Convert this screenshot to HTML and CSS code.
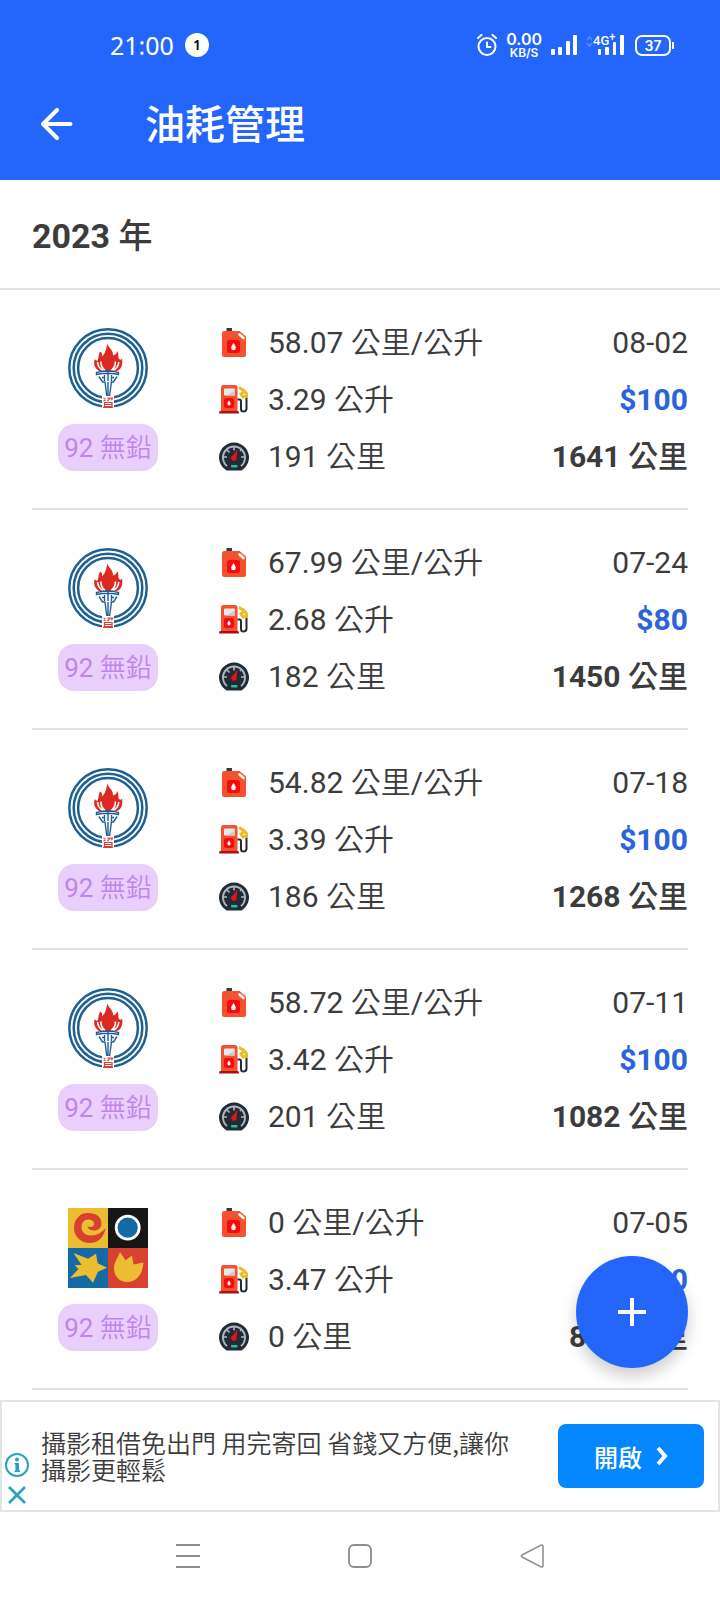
FILE: index.html
```html
<!DOCTYPE html>
<html lang="zh-Hant">
<head>
<meta charset="utf-8">
<meta name="viewport" content="width=device-width, initial-scale=1">
<title>油耗管理</title>
<link rel="stylesheet" href="styles.css">
</head>
<body>
<svg class="sprite" aria-hidden="true">
  <symbol id="torch" viewBox="0 0 80 80">
    <g fill="none" stroke="#1f6093" stroke-width="2.500">
      <circle cx="40" cy="40" r="38.700"/><circle cx="40" cy="40" r="34.300"/><circle cx="40" cy="40" r="29.900"/>
    </g>
    <path fill="#fff" d="M34 65h12v15H34z"/>
    <path fill="#dc2a22" d="M39.500 15.500c.3 4 6 6 5.500 12 2.500-.8 4-2 4-4.500 2.500 3 .5 5.500 2 8 1.500 1.500 2.500.5 3-.5C55 36 54 41 49 43H31c-4.500-3-6-8-4-12 .8 1.500 1.500 2 2.500 1.500 1.500-2.500.5-5 2.500-9 2.500 1 2 3 2 5C38.500 24 38 20 39.500 15.500z"/>
    <path fill="none" stroke="#fff" stroke-width="1.600" d="M29.500 34c.3 4 2 6.500 5.500 8.500M33 33.500c-.5 3.500.5 6 4 9M50.800 34c-.3 4-2 6.500-5.500 8.500M47.300 33.500c.5 3.500-.5 6-4 9"/>
    <g fill="none" stroke="#1f6093" stroke-width="1.400">
      <path d="M28.500 44.500q11.500-3 22 0v2q-11-2.600-22 0zM31 48.500l3.500 5.500h3M49 48.500l-3.500 5.500h-3M36.500 47v6M43.500 47v6M40 42.500V53M34 49.500h2.500M43.500 49.500H46M37 54l1.800 14M40 54v14M43.500 54l-2 14"/>
    </g>
    <g fill="none" stroke="#d6403c" stroke-width="1.200"><path d="M35.500 70.200l2 .8M35.500 73l2-1M39.500 70.200h5l-1 2M41.500 71l-2 2M36.500 74.500h7.500v4h-7.500zM36.500 76.500h7.500M35 79.300h10"/></g>
  </symbol>
  <symbol id="mosaic" viewBox="0 0 80 80">
    <path fill="#edbd31" d="M0 0h40v40H0z"/><path fill="#161616" d="M40 0h40v40H40z"/>
    <path fill="#146aa4" d="M0 40h40v40H0z"/><path fill="#d8412f" d="M40 40h40v40H40z"/>
    <path fill="#d8412f" d="M37.700 20C36 29 30 35 22 35 12 35 6 28 6 20 6 11 12 5 20 5c8 0 13.500 4 13.500 10.500 0 4.500-3.500 7-7.500 7-3.500 0-6-1.500-6.500-4 3 1 6 .5 6.500-2 .5-3.500-2.500-5-5.500-5-4.500 0-7 3.500-7 7.500 0 5.500 4 8.500 9.500 8.500 6.500 0 10.500-3 14.700-7.500z"/>
    <circle cx="59.700" cy="19.700" r="11.500" fill="#146aa4" stroke="#fff" stroke-width="2.800"/>
    <path fill="#edbd31" d="M5.500 45L20 50.700l8-5 1.700 9.600L39 59.700l-9 4L25 74.700 18 67 2 70l8.500-9-3.800-3.700 6.800-.6z"/>
    <path fill="#edbd31" d="M52 44l5.500 8.300L64 47.500l1.500 9 10-2C74.500 65 70 74 59 74c-8 0-13-6-13-14 0-6 4-10 6-16z"/>
  </symbol>
  <symbol id="can" viewBox="0 0 30 30">
    <path fill="#343a40" d="M7.500 0h5.500v5H7.500z"/>
    <path fill="#f5512e" d="M5.500 3H20.500L27 8.500V27a2 2 0 0 1-2 2H5.500A2.500 2.500 0 0 1 3 26.500v-21A2.500 2.500 0 0 1 5.500 3z"/>
    <path stroke="#fff" stroke-width="2.600" stroke-linecap="round" d="M20.500 6.500l4 3.500"/>
    <rect x="8" y="12" width="13" height="13" rx="2.500" fill="#f40b0b"/>
    <path fill="#fff" d="M14.500 15c1.500 2.300 2.300 3.500 2.300 5a2.300 2.300 0 0 1-4.600 0c0-1.500.8-2.700 2.300-5z"/>
  </symbol>
  <symbol id="pump" viewBox="0 1 30 30">
    <path fill="#f5512e" d="M4.500 1H16a2.500 2.500 0 0 1 2.500 2.500V28H2V3.500A2.500 2.500 0 0 1 4.500 1z"/>
    <rect x="5" y="4.500" width="11" height="7" rx="1" fill="#e6e9ee"/><path fill="#c9ced6" d="M16 6v5.500H8z"/>
    <rect x="5" y="14" width="10" height="10" rx="2.500" fill="#f40b0b"/>
    <path fill="#fff" d="M10 16.500c1 1.500 1.600 2.300 1.600 3.300a1.600 1.600 0 0 1-3.200 0c0-1 .6-1.800 1.600-3.300z"/>
    <path fill="#a90f16" d="M1 27h18q1 0 1 2.500H0Q0 27 1 27z"/>
    <path fill="none" stroke="#252d35" stroke-width="2" d="M18.500 15.500h2q1.500 0 1.500 2V25q0 2.500 2.500 2.500T27.500 25V13"/>
    <path fill="none" stroke="#e9bd2b" stroke-width="3" d="M20 3.500l5 3 2.500 3V14M25 7.500l-3 2.500 2 3 3.500-1"/>
  </symbol>
  <symbol id="gauge" viewBox="0 0 30 30">
    <path fill="#222c35" d="M7.500 28.500A15 15 0 1 1 22.500 28.500z"/>
    <path fill="none" stroke="#aeb9c4" stroke-width="1.900" d="M8 24A11 11 0 1 1 22 24"/>
    <path stroke="#aeb9c4" stroke-width="1.600" d="M15 4.500v4M4 15h4M26 15h-4M7.500 7.500l3 3M22.500 7.500L21 9"/>
    <path fill="#e3141c" d="M18.500 7.500l-1 8a2.700 2.700 0 1 1-3.500-2z"/>
    <rect x="12" y="23" width="6.500" height="2.600" rx=".8" fill="#22bfa0"/>
  </symbol>
</svg>

<header class="top">
  <div class="status">
    <span class="clock">21:00</span>
    <span class="count">1</span>
    <div class="signals">
      <svg width="20" height="22" viewBox="0 0 20 22" fill="none" stroke="#fff" stroke-width="2" stroke-linecap="round"><circle cx="10" cy="12.500" r="8.500"/><path d="M10 8.500v4.500h3.500M1 4l3.500-3M19 4l-3.500-3"/></svg>
      <span class="speed"><b>0.00</b><small>KB/S</small></span>
      <svg width="26" height="20" viewBox="0 0 26 20" fill="#fff"><rect y="14" width="4" height="6" rx="1"/><rect x="7" y="12" width="4" height="8" rx="1"/><rect x="15" y="6" width="4" height="14" rx="1"/><rect x="22" width="4" height="20" rx="1"/></svg>
      <span class="mobile">
        <svg width="38" height="20" viewBox="0 0 38 20" fill="#fff"><path fill="none" stroke="#5c8cff" stroke-width="1.500" d="M1 5l2.500-3L6 5M1 8l2.500 3L6 8"/><rect x="12" y="14" width="3" height="6" rx="1"/><rect x="19" y="12" width="4" height="8" rx="1"/><rect x="27" y="7" width="3" height="13" rx="1"/><rect x="34" width="4" height="20" rx="1"/></svg>
        <span class="network">4G<sup>+</sup></span>
      </span>
      <span class="battery">37</span>
    </div>
  </div>
  <div class="bar">
    <button class="back" aria-label="返回"><svg width="32" height="32" viewBox="0 0 32 32" fill="none" stroke="#fff" stroke-width="4" stroke-linecap="round" stroke-linejoin="round"><path d="M16 2L2 16l14 14M3 16h26.500"/></svg></button>
    <h1>油耗管理</h1>
  </div>
</header>

<main>
  <h2>2023 <span class="unit">年</span></h2>
  <ul class="records">
    <li class="record">
      <div class="brand"><svg class="logo"><use href="#torch"/></svg><span class="fuel">92 無鉛</span></div>
      <ul class="lines">
        <li><svg class="icon"><use href="#can"/></svg><span>58.07 公里/公升</span><time>08-02</time></li>
        <li><svg class="icon"><use href="#pump"/></svg><span>3.29 公升</span><b class="price">$100</b></li>
        <li><svg class="icon"><use href="#gauge"/></svg><span>191 公里</span><b>1641 <span class="unit">公里</span></b></li>
      </ul>
    </li>
    <li class="record">
      <div class="brand"><svg class="logo"><use href="#torch"/></svg><span class="fuel">92 無鉛</span></div>
      <ul class="lines">
        <li><svg class="icon"><use href="#can"/></svg><span>67.99 公里/公升</span><time>07-24</time></li>
        <li><svg class="icon"><use href="#pump"/></svg><span>2.68 公升</span><b class="price">$80</b></li>
        <li><svg class="icon"><use href="#gauge"/></svg><span>182 公里</span><b>1450 <span class="unit">公里</span></b></li>
      </ul>
    </li>
    <li class="record">
      <div class="brand"><svg class="logo"><use href="#torch"/></svg><span class="fuel">92 無鉛</span></div>
      <ul class="lines">
        <li><svg class="icon"><use href="#can"/></svg><span>54.82 公里/公升</span><time>07-18</time></li>
        <li><svg class="icon"><use href="#pump"/></svg><span>3.39 公升</span><b class="price">$100</b></li>
        <li><svg class="icon"><use href="#gauge"/></svg><span>186 公里</span><b>1268 <span class="unit">公里</span></b></li>
      </ul>
    </li>
    <li class="record">
      <div class="brand"><svg class="logo"><use href="#torch"/></svg><span class="fuel">92 無鉛</span></div>
      <ul class="lines">
        <li><svg class="icon"><use href="#can"/></svg><span>58.72 公里/公升</span><time>07-11</time></li>
        <li><svg class="icon"><use href="#pump"/></svg><span>3.42 公升</span><b class="price">$100</b></li>
        <li><svg class="icon"><use href="#gauge"/></svg><span>201 公里</span><b>1082 <span class="unit">公里</span></b></li>
      </ul>
    </li>
    <li class="record">
      <div class="brand"><svg class="logo"><use href="#mosaic"/></svg><span class="fuel">92 無鉛</span></div>
      <ul class="lines">
        <li><svg class="icon"><use href="#can"/></svg><span>0 公里/公升</span><time>07-05</time></li>
        <li><svg class="icon"><use href="#pump"/></svg><span>3.47 公升</span><b class="price">$100</b></li>
        <li><svg class="icon"><use href="#gauge"/></svg><span>0 公里</span><b>881 <span class="unit">公里</span></b></li>
      </ul>
    </li>
  </ul>
  <button class="add" aria-label="新增"><svg width="28" height="28" viewBox="0 0 28 28" stroke="#fff" stroke-width="4"><path d="M14 0v28M0 14h28"/></svg></button>
</main>

<aside class="ad">
  <div class="ad-tools">
    <button aria-label="廣告資訊"><svg width="24" height="24" viewBox="0 0 24 24" fill="none" stroke="#26a3bd"><circle cx="12" cy="12" r="11" stroke-width="2"/><path stroke-width="3.600" d="M12.200 10V19"/><path stroke-width="1.500" d="M9.500 10.700h3M9.500 18.300h5.500"/><circle cx="12" cy="6.500" r="2" fill="#26a3bd" stroke="none"/></svg></button>
    <button aria-label="關閉廣告"><svg width="18" height="18" viewBox="0 0 18 18" stroke="#26a3bd" stroke-width="2.600"><path d="M1 1l16 16M17 1L1 17"/></svg></button>
  </div>
  <p>攝影租借免出門 用完寄回 省錢又方便,讓你攝影更輕鬆</p>
  <button class="open">開啟<svg width="12" height="20" viewBox="0 0 12 20" fill="none" stroke="#fff" stroke-width="4"><path d="M2 2l7 8-7 8"/></svg></button>
</aside>

<nav class="system">
  <button aria-label="最近使用"><svg width="24" height="24" viewBox="0 0 24 24" stroke="#8c8c8c" stroke-width="2"><path d="M0 1h24M0 12h24M0 23h24"/></svg></button>
  <button aria-label="主畫面"><svg width="24" height="24" viewBox="0 0 24 24" fill="none" stroke="#8c8c8c" stroke-width="1.800"><rect x="1" y="1" width="22" height="22" rx="5"/></svg></button>
  <button aria-label="返回"><svg width="24" height="24" viewBox="0 0 24 24" fill="none" stroke="#8c8c8c" stroke-width="1.500" stroke-linejoin="round"><path d="M2 11L21 1.200q2-.8 2 1v19.600q0 1.800-2 1L2 13q-1.500-1 0-2z"/></svg></button>
</nav>
</body>
</html>
```

FILE: styles.css
```css
* { box-sizing: border-box; }

body {
  margin: 0;
  min-height: 100vh;
  display: flex;
  flex-direction: column;
  background: #fff;
  color: #3c3c3c;
  font-family: Roboto, "Noto Sans CJK TC", sans-serif;
}

h1, h2, p, ul { margin: 0; padding: 0; }
ul { list-style: none; }
svg { display: block; flex: none; }
button { border: 0; padding: 0; background: none; color: inherit; font: inherit; }
.sprite { position: absolute; width: 0; height: 0; }

.top { background: #2466fc; color: #fff; padding-top: 26px; }

.status { display: flex; align-items: center; height: 38px; padding: 0 49px 0 110px; }
.clock { font: 25px/38px "Noto Sans", sans-serif; }
.count {
  margin-left: 11px;
  width: 24px;
  border-radius: 50%;
  background: #fff;
  color: #000;
  font: 600 14px/24px "Noto Sans", sans-serif;
  text-align: center;
}
.signals { margin-left: auto; display: flex; align-items: center; gap: 9px; }
.speed { display: flex; flex-direction: column; text-align: center; font-family: Inter, sans-serif; }
.speed b { font-size: 16px; line-height: 14px; font-weight: 600; }
.speed small { font-size: 12px; line-height: 13px; font-weight: 600; }
.mobile { position: relative; }
.network { position: absolute; left: 7px; top: -2px; font-size: 13px; line-height: 16px; font-weight: 500; white-space: nowrap; }
.network sup { font-size: 11px; line-height: 8px; }
.battery {
  position: relative;
  margin-left: 2px;
  width: 36px;
  border: 2px solid #fff;
  border-radius: 7px;
  font: 600 14px/17px Inter, sans-serif;
  text-align: center;
}
.battery::after { content: ""; position: absolute; right: -5px; top: 5px; width: 2px; height: 7px; background: #fff; }

.bar { display: flex; align-items: center; gap: 72px; padding: 20px 41px 17px; }
h1 { padding-top: 4px; font-size: 40px; line-height: 75px; font-weight: 500; }

main { flex: 1; position: relative; }
h2 { padding: 36px 32px 32px; border-bottom: 2px solid #e2e2e2; font-size: 34px; line-height: 40px; }
.unit { font-weight: 500; }

.records { padding: 0 32px; }
.record { display: flex; align-items: center; padding: 24px 0 23px; border-bottom: 2px solid #e2e2e2; }
.brand { width: 152px; display: flex; flex-direction: column; align-items: center; gap: 16px; }
.logo { width: 80px; height: 80px; }
.fuel {
  padding: 2px 6px 0;
  border-radius: 16px;
  background: #e9cffc;
  color: #c084ee;
  font-family: Roboto, "Noto Sans CJK TC DemiLight", "Noto Sans CJK TC", sans-serif;
  font-size: 26px;
  line-height: 45px;
}
.lines { flex: 1; padding-left: 35px; font-size: 30px; line-height: 57px; }
.lines li { display: flex; align-items: center; gap: 19px; }
.lines li > span { font-family: Roboto, "Noto Sans CJK TC DemiLight", "Noto Sans CJK TC", sans-serif; }
.lines time, .lines b { margin-left: auto; }
.icon { width: 30px; height: 30px; }
.price { color: #2b64d9; }

.add {
  position: absolute;
  right: 32px;
  bottom: 32px;
  width: 112px;
  height: 112px;
  border-radius: 50%;
  background: #2466fc;
  display: grid;
  place-items: center;
  box-shadow: 0 8px 16px rgba(0, 0, 0, .2);
}

.ad {
  display: flex;
  align-items: center;
  border: 2px solid #e4e4e4;
  padding: 22px 14px 22px 3px;
}
.ad-tools { align-self: flex-end; display: flex; flex-direction: column; align-items: center; gap: 9px; margin-bottom: -16px; }
.ad p {
  flex: 1;
  padding: 0 40px 0 12px;
  font-family: "Noto Sans CJK TC DemiLight", "Noto Sans CJK TC", sans-serif;
  font-size: 25px;
  line-height: 27px;
}
.open {
  display: flex;
  align-items: center;
  justify-content: center;
  gap: 14px;
  width: 146px;
  height: 64px;
  border-radius: 8px;
  background: #0587ff;
  color: #fff;
  font-size: 24px;
  font-weight: 500;
}

.system { display: flex; justify-content: center; gap: 148px; padding: 32px 0; }
```
